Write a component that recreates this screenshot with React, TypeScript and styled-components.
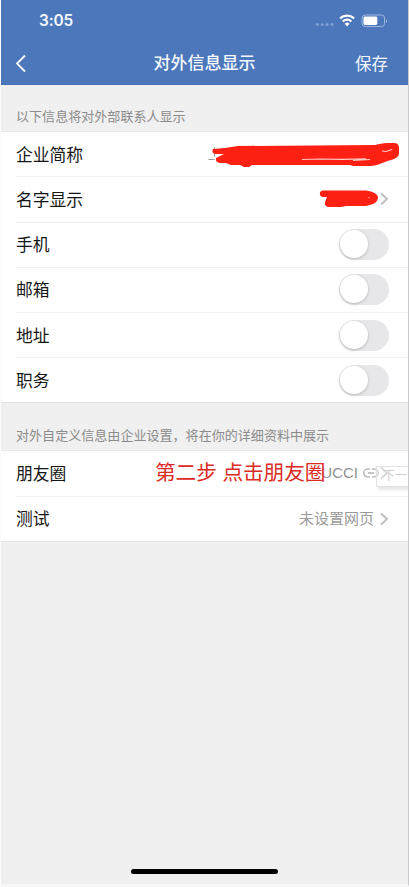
import React from "react";
import styled, { createGlobalStyle } from "styled-components";

const GlobalStyle = createGlobalStyle`
  * { box-sizing: border-box; }
  body {
    margin: 0;
    background: #f0f0f0;
    font-family: "Liberation Sans", "Noto Sans CJK SC", sans-serif;
  }
`;

const Screen = styled.div`
  position: relative;
  width: 409px;
  height: 887px;
  overflow: hidden;
  display: flex;
  flex-direction: column;
  background: #f0f0f0;
  border-left: 1px solid #fbfbfb;
  border-right: 1px solid #c9c9cb;
  border-bottom: 3px solid #f7f7f7;
`;

const Header = styled.header`
  height: 85px;
  flex: none;
  background: #4c77bb;
  border-bottom: 1px solid #4270b5;
  color: #f4f9ff;
`;

const StatusBar = styled.div`
  height: 41px;
  display: flex;
  align-items: center;
  justify-content: space-between;
  padding: 0 20px 0 38px;
`;

const Clock = styled.span`
  font: 600 15.4px/20px Inter, sans-serif;
  letter-spacing: -0.1px;
`;

const StatusIcons = styled.svg`
  width: 73px;
  height: 18px;
  display: block;
`;

const NavBar = styled.div`
  height: 43px;
  display: grid;
  grid-template-columns: 100px 1fr 100px;
  align-items: center;
  padding: 2px 20px 0 13px;
`;

const BackIcon = styled.svg`
  width: 14px;
  height: 20px;
`;

const Title = styled.h1`
  margin: 0;
  padding-left: 7px;
  text-align: center;
  font-size: 17px;
  line-height: 24px;
  font-weight: 500;
`;

const Save = styled.span`
  text-align: right;
  font-size: 16.5px;
  line-height: 24px;
`;

const Caption = styled.div<{ $height: number }>`
  height: ${(p) => p.$height}px;
  flex: none;
  display: flex;
  align-items: flex-end;
  padding: 0 15px 4px;
  font-size: 13.05px;
  line-height: 20px;
  color: #8b8b8b;
  white-space: nowrap;
`;

const Group = styled.section`
  flex: none;
  background: #fff;
  border-top: 1px solid #e9e9e9;
  border-bottom: 1px solid #e3e3e3;
`;

const Row = styled.div`
  position: relative;
  height: 45.25px;
  margin-left: 15px;
  padding-right: 19px;
  display: flex;
  align-items: center;
  justify-content: space-between;
  border-bottom: 1px solid #f1f1f1;
  &:last-child { border-bottom: 0; height: 44px; }
`;

const Label = styled.span`
  padding-top: 3px;
  font-size: 16.8px;
  line-height: 24px;
  color: #161616;
`;

const Value = styled.span`
  display: flex;
  align-items: center;
  font-size: 15px;
  line-height: 22px;
  color: #9b9b9b;
`;

const Brand = styled.span`
  font-family: "Liberation Sans", sans-serif;
  font-size: 15px;
  line-height: 20px;
  margin-right: 5px;
  color: #929292;
`;

const ArrowIcon = styled.svg`
  width: 10px;
  height: 14px;
  margin-left: 5px;
`;

const LinkIcon = styled.svg`
  width: 16px;
  height: 10px;
  & + ${ArrowIcon} { margin-left: 0; }
`;

const Track = styled.span`
  width: 50px;
  height: 31px;
  border-radius: 16px;
  background: #e7e7ea;
  padding: 1px;
`;

const Knob = styled.span`
  display: block;
  width: 28px;
  height: 28px;
  border-radius: 50%;
  background: #fff;
  box-shadow: 0 1px 3px rgba(0, 0, 0, 0.22);
`;

const Redaction = styled.svg`
  position: absolute;
  left: 192px;
  top: -1px;
  width: 200px;
  height: 90px;
  z-index: 1;
  pointer-events: none;
`;

const Note = styled.span`
  position: absolute;
  left: 139px;
  top: 7px;
  font-size: 20.7px;
  line-height: 30px;
  letter-spacing: -0.1px;
  color: #dc2b24;
  white-space: nowrap;
`;

const Tooltip = styled.span`
  position: absolute;
  left: 360px;
  top: 15px;
  width: 36px;
  height: 21px;
  padding-left: 6px;
  border: 1px solid #e2e2e2;
  background: rgba(255, 255, 255, 0.4);
  box-shadow: 2px 3px 3px rgba(0, 0, 0, 0.1);
  font-size: 12px;
  line-height: 19px;
  color: #cfcfcf;
  white-space: nowrap;
`;

const HomeBar = styled.div`
  width: 147px;
  height: 5px;
  flex: none;
  margin: auto auto 10px 130px;
  border-radius: 3px;
  background: #000;
`;

const Arrow = () => (
  <ArrowIcon viewBox="0 0 10 14" fill="none" stroke="#bdbfc3" strokeWidth="1.9">
    <path d="M2 1.5 8 7 2 12.5" />
  </ArrowIcon>
);

const toggles = ["手机", "邮箱", "地址", "职务"];

export default function App() {
  return (
    <Screen>
      <GlobalStyle />
      <Header>
        <StatusBar>
          <Clock>3:05</Clock>
          <StatusIcons viewBox="0 0 73 18" fill="none">
            <g fill="#7f9fd3">
              <circle cx="2.3" cy="12.6" r="1.5" />
              <circle cx="7.2" cy="12.6" r="1.5" />
              <circle cx="12.1" cy="12.6" r="1.5" />
              <circle cx="17" cy="12.6" r="1.5" />
            </g>
            <g stroke="#fff" strokeWidth="2.3">
              <path d="M25.1 6.4a10.200 10.200 0 0 1 14 0" />
              <path d="M27.800 9.500a6 6 0 0 1 8.600 0" />
            </g>
            <path d="M29.600 11.700a3.500 3.500 0 0 1 5 0L32.100 14.400z" fill="#fff" />
            <rect x="47.100" y="3" width="22.400" height="11.500" rx="3" stroke="#9db7df" />
            <rect x="48.500" y="4.500" width="13.800" height="8.500" rx="1.400" fill="#fff" />
            <path d="M71 7.200c1.500.4 1.500 3.200 0 3.600z" fill="#9db7df" />
          </StatusIcons>
        </StatusBar>
        <NavBar>
          <BackIcon viewBox="0 0 14 20" fill="none" stroke="#f4f9ff" strokeWidth="1.8">
            <path d="M11 1.500 3 9.500 11 17.500" />
          </BackIcon>
          <Title>对外信息显示</Title>
          <Save>保存</Save>
        </NavBar>
      </Header>

      <Caption $height={46}>以下信息将对外部联系人显示</Caption>
      <Group>
        <Row>
          <Label>企业简称</Label>
          <Redaction viewBox="208 131 200 90" fill="none">
            <path d="M214.500 147.500v9M208.500 159.500h6" stroke="#999" />
            <path
              fill="#ff2014"
              d="M213 149 225 148 238 146 375 145C379 144 383 143 387 143H394Q399 143 399 148V154Q398 158 391 160C381 163 376 166 371 166H353L350 165H252L249 167H244L240 165H231L226 163H220Q215 162 216 158L224 154H215Q211 153 213 149z"
            />
            <path
              d="M302 159.500 320 159 342 159.400 366 158.800M353 160.500 370 159.500M382 151 386 151.500 392 149.500"
              stroke="#ffc9c4"
              strokeWidth="1.2"
            />
            <path
              fill="#ff2014"
              d="M323 190.500H366Q377 192 378 197Q378 202 373 204L366 206H346L341 207H328Q324 206 325 202L327 197H323Q319 196 320 193Q320 191 323 190.500z"
            />
            <path d="M369 197v1.500" stroke="#ff9a92" />
          </Redaction>
        </Row>
        <Row>
          <Label>名字显示</Label>
          <Value><Arrow /></Value>
        </Row>
        {toggles.map((name) => (
          <Row key={name}>
            <Label>{name}</Label>
            <Track><Knob /></Track>
          </Row>
        ))}
      </Group>

      <Caption $height={47}>对外自定义信息由企业设置，将在你的详细资料中展示</Caption>
      <Group>
        <Row>
          <Label>朋友圈</Label>
          <Value>
            <Brand>UCCI</Brand>
            <LinkIcon viewBox="0 0 16 10" fill="none" stroke="#b2b4b8" strokeWidth="1.3">
              <path d="M7 1.200H4.500a3.800 3.800 0 0 0 0 7.600H7M9 1.200h2.500a3.800 3.800 0 0 1 0 7.600H9M5 5h6" />
            </LinkIcon>
            <Arrow />
          </Value>
          <Note>第二步 点击朋友圈</Note>
          <Tooltip>下一</Tooltip>
        </Row>
        <Row>
          <Label>测试</Label>
          <Value>未设置网页<Arrow /></Value>
        </Row>
      </Group>
      <HomeBar />
    </Screen>
  );
}
